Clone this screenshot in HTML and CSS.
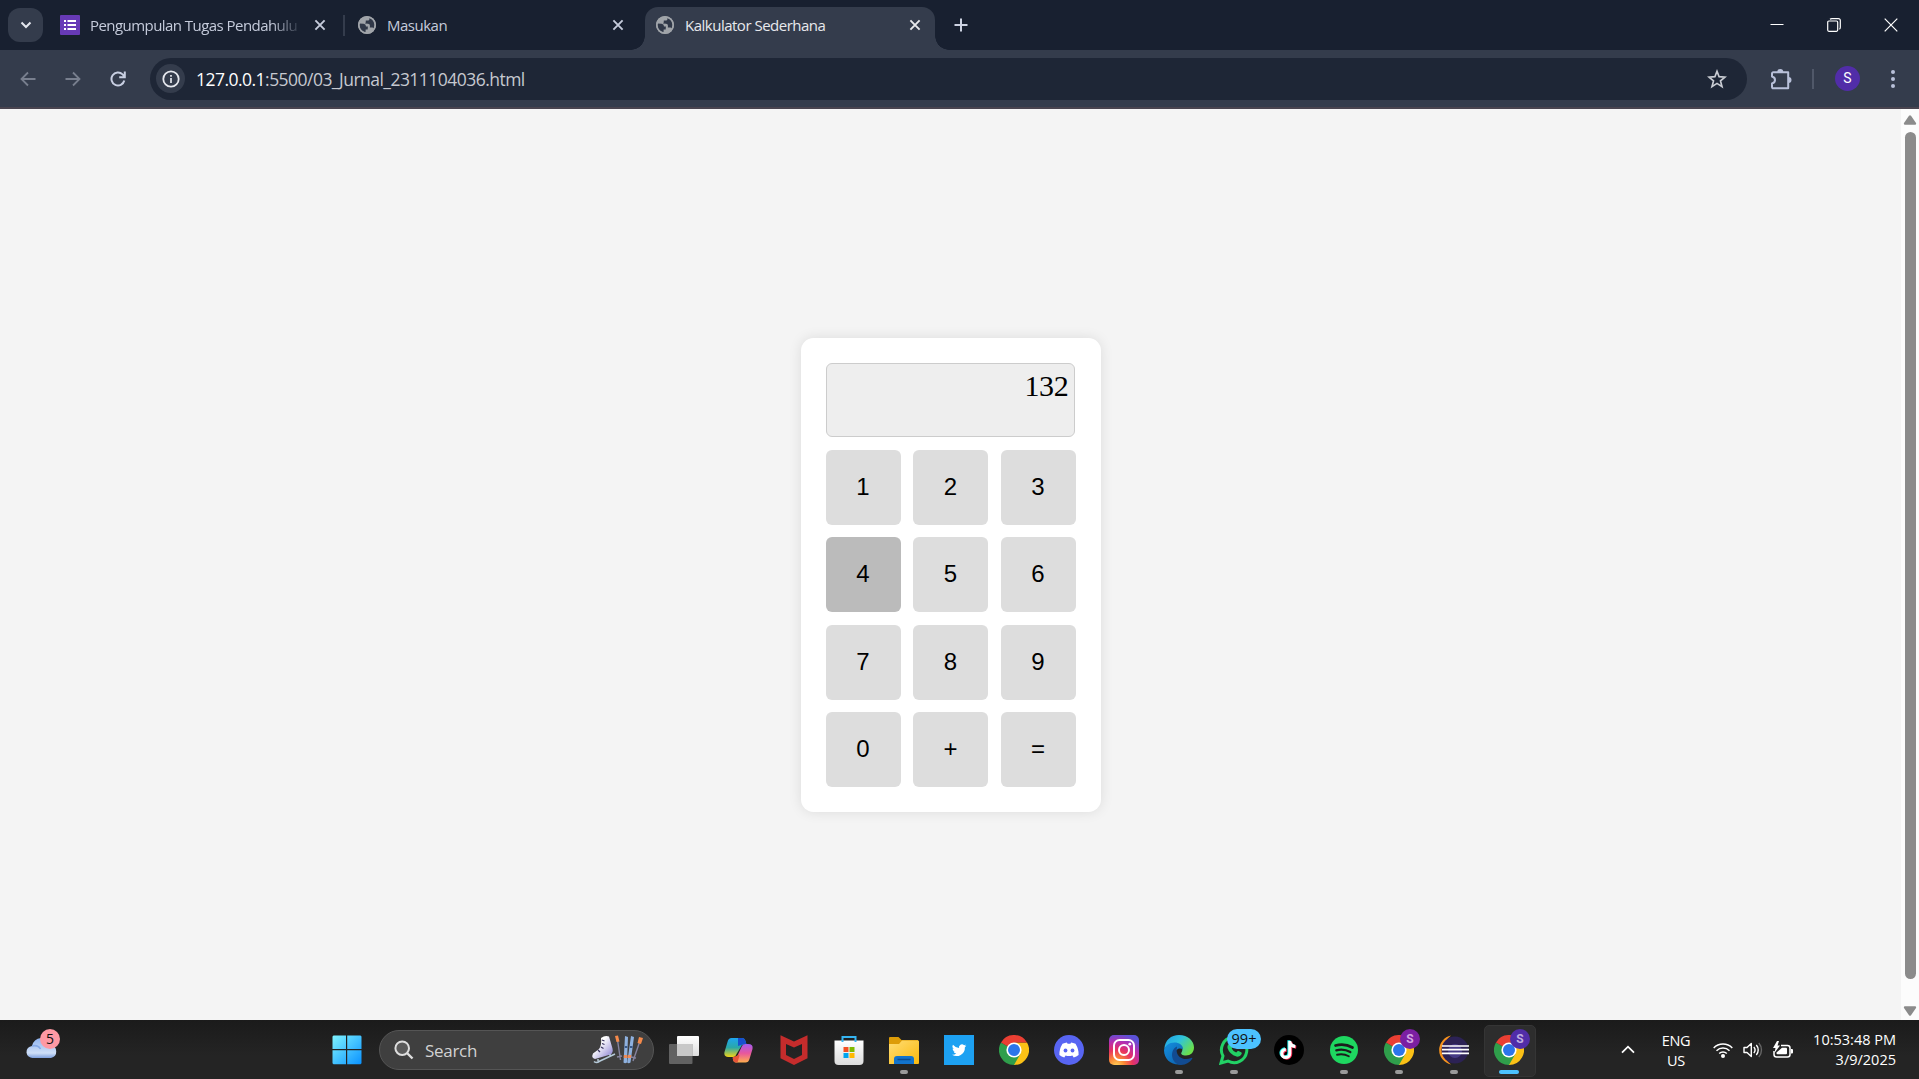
FILE: index.html
```html
<!DOCTYPE html>
<html lang="id">
<head>
<meta charset="utf-8">
<title>Kalkulator Sederhana</title>
<link rel="stylesheet" href="styles.css">
</head>
<body>
<svg class="defs" width="0" height="0" aria-hidden="true">
  <defs>
    <linearGradient id="win" x1="0" y1="0" x2="1" y2="1"><stop offset="0" stop-color="#7ff4ff"/><stop offset="1" stop-color="#0a92ff"/></linearGradient>
    <linearGradient id="cloud" x1="0" y1="0" x2="0" y2="1"><stop offset="0" stop-color="#8fb4f0"/><stop offset=".75" stop-color="#cfdff7"/><stop offset="1" stop-color="#7d9fdd"/></linearGradient>
    <linearGradient id="copA" x1="0" y1="0" x2="0" y2="1"><stop offset="0" stop-color="#1ea5f0"/><stop offset=".5" stop-color="#2aa8a8"/><stop offset="1" stop-color="#f2d415"/></linearGradient>
    <linearGradient id="copB" x1="0" y1="0" x2="0" y2="1"><stop offset="0" stop-color="#a45cf0"/><stop offset=".5" stop-color="#e8579c"/><stop offset="1" stop-color="#ffae4d"/></linearGradient>
    <linearGradient id="fold" x1="0" y1="0" x2="1" y2="1"><stop offset="0" stop-color="#ffdd75"/><stop offset="1" stop-color="#fbb90c"/></linearGradient>
    <linearGradient id="bag" x1="0" y1="0" x2="0" y2="1"><stop offset="0" stop-color="#fff"/><stop offset="1" stop-color="#dcdcdc"/></linearGradient>
    <radialGradient id="insta" cx=".25" cy="1.05" r="1.1"><stop offset="0" stop-color="#ffd85c"/><stop offset=".25" stop-color="#fb8a35"/><stop offset=".5" stop-color="#e8345f"/><stop offset=".75" stop-color="#b82fae"/><stop offset="1" stop-color="#5b52d8"/></radialGradient>
    <linearGradient id="edgeTop" x1="0" y1="0" x2="1" y2=".6"><stop offset="0" stop-color="#1f9de8"/><stop offset=".5" stop-color="#2fc3dc"/><stop offset="1" stop-color="#6be04a"/></linearGradient>
    <linearGradient id="edgeBot" x1="0" y1="0" x2="1" y2="1"><stop offset="0" stop-color="#1490e0"/><stop offset="1" stop-color="#0c59a4"/></linearGradient>
    <linearGradient id="tv" x1="0" y1="0" x2="0" y2="1"><stop offset="0" stop-color="#fff"/><stop offset="1" stop-color="#dedede"/></linearGradient>
    <linearGradient id="skate" x1="0" y1="0" x2="1" y2="1"><stop offset=".35" stop-color="#fff"/><stop offset="1" stop-color="#8177cf"/></linearGradient>
    <symbol id="x" viewBox="0 0 12 12"><path d="M1.4 1.4l9.2 9.2M10.6 1.4L1.4 10.6" stroke="currentColor" stroke-width="1.9" fill="none"/></symbol>
    <symbol id="globe" viewBox="0 0 20 20"><circle cx="10" cy="10" r="9" fill="#a0a4a9"/><path d="M2.200 9H6.500q2.500 0 2.500 2.500h2v3H9V17.500C5 17.500 2.200 14 2.200 9zM12 2.500V4q0 1.500-1.500 1.500H8.500V7.500q0 1.200-1.200 1.200H11q2 0 2 2v1.500h2.500q1 0 1.500.8a7.500 7.500 0 0 0-5-10.500z" fill="#303848" transform="rotate(4 10 10)"/><circle cx="10" cy="10" r="8.200" fill="none" stroke="#a0a4a9" stroke-width="1.700"/></symbol>
    <symbol id="chrome" viewBox="0 0 30 30">
      <path d="M15 15V7.500H28A15 15 0 0 1 15 30z" fill="#fbc116"/>
      <path d="M15 15l6.500 3.750L15 30A15 15 0 0 1 2 7.500z" fill="#2f9e4b"/>
      <path d="M15 15L2 7.500A15 15 0 0 1 28 7.500H15z" fill="#ea3f33"/>
      <circle cx="15" cy="15" r="7.600" fill="#fff"/><circle cx="15" cy="15" r="6" fill="#2b75ea"/>
    </symbol>
  </defs>
</svg>

<div class="screen">
  <header class="tabstrip">
    <div class="tab-search"><svg width="12" height="12" viewBox="0 0 12 12"><path d="M1.500 3.500L6 8l4.500-4.500" fill="none" stroke="#e4e7ee" stroke-width="2"/></svg></div>
    <div class="tab tab-one">
      <svg class="forms" width="20" height="20" viewBox="0 0 20 20"><rect width="20" height="20" rx="1" fill="#673ab7"/><path d="M4 6h2M4 10h2M4 14h2M7.500 6H16M7.500 10H16M7.500 14H16" stroke="#fff" stroke-width="2"/></svg>
      <span class="title fade">Pengumpulan Tugas Pendahulu</span>
      <svg class="close" width="12" height="12"><use href="#x"/></svg>
    </div>
    <i class="tab-sep"></i>
    <div class="tab tab-two">
      <svg width="20" height="20"><use href="#globe"/></svg>
      <span class="title">Masukan</span>
      <svg class="close" width="12" height="12"><use href="#x"/></svg>
    </div>
    <div class="tab active">
      <svg width="20" height="20"><use href="#globe"/></svg>
      <span class="title">Kalkulator Sederhana</span>
      <svg class="close" width="12" height="12"><use href="#x"/></svg>
    </div>
    <svg class="new-tab" width="14" height="14" viewBox="0 0 14 14"><path d="M7 .5v13M.5 7h13" stroke="#cdd3e2" stroke-width="2"/></svg>
    <div class="window-controls">
      <svg width="14" height="14" viewBox="0 0 14 14"><path d="M.5 6.500h13" stroke="#fff"/></svg>
      <svg width="14" height="14" viewBox="0 0 14 14" fill="none" stroke="#fff"><rect x=".7" y="3" width="10" height="10.300" rx="1.200" stroke-width="1.200"/><path d="M3 1.200C3.600.7 4 .6 5 .6h6.300c1.300 0 2 .7 2 2v6.600c0 1-.2 1.600-.9 2" stroke-width="1.200"/></svg>
      <svg width="14" height="14" viewBox="0 0 14 14"><path d="M.7.7l12.600 12.600M13.300.7L.7 13.300" stroke="#fff" stroke-width="1.200"/></svg>
    </div>
  </header>

  <nav class="toolbar">
    <svg class="nav-ic dim" width="16" height="16" viewBox="0 0 16 16"><path d="M15.500 8H1.500M8 1.500L1.500 8 8 14.500"/></svg>
    <svg class="nav-ic dim" width="16" height="16" viewBox="0 0 16 16"><path d="M.5 8h14M8 1.500L14.500 8 8 14.500"/></svg>
    <svg class="nav-ic" width="16" height="16" viewBox="0 0 16 16"><path d="M14.300 9.500A6.500 6.500 0 1 1 12.600 3.400L14.500 5.500M14.800.5v5.700H9.200"/></svg>
    <div class="omnibox">
      <span class="info"><svg width="18" height="18" viewBox="0 0 18 18"><circle cx="9" cy="9" r="7.700" fill="none" stroke="#e6e8ee" stroke-width="1.800"/><path d="M9 8v5M9 5v1.800" stroke="#e6e8ee" stroke-width="1.700"/></svg></span>
      <span class="url"><b>127.0.0.1</b>:5500/03_Jurnal_2311104036.html</span>
      <svg class="star" width="20" height="20" viewBox="0 0 20 20"><path d="M10 2.300l2.100 5.400 5.900.4-4.500 3.800 1.500 5.700-5-3.200-5 3.200 1.500-5.700L2 8.100l5.900-.4z" fill="none" stroke="#c9ccd3" stroke-width="1.700"/></svg>
    </div>
    <svg class="ext" width="22" height="22" viewBox="0 0 22 22"><path d="M3.200 4.300h15v16h-15a1.200 1.200 0 0 1-1.200-1.200V15.500c4-1 4-6 0-7V5.500a1.200 1.200 0 0 1 1.200-1.200z" fill="none" stroke="#b9c1da" stroke-width="2" stroke-linejoin="round"/><path d="M7.300 4a3 3 0 0 1 6 0zM18.500 9a3 3 0 0 1 0 6z" fill="#b9c1da"/></svg>
    <i class="tool-sep"></i>
    <span class="avatar">S</span>
    <svg class="dots" width="6" height="20" viewBox="0 0 6 20"><g fill="#b9c1da"><circle cx="3" cy="3" r="2"/><circle cx="3" cy="10" r="2"/><circle cx="3" cy="17" r="2"/></g></svg>
  </nav>

  <div class="viewport">
    <main class="page">
      <section class="calculator">
        <div class="display">132</div>
        <div class="keys">
          <button>1</button><button>2</button><button>3</button>
          <button class="hover">4</button><button>5</button><button>6</button>
          <button>7</button><button>8</button><button>9</button>
          <button>0</button><button>+</button><button>=</button>
        </div>
      </section>
    </main>
    <aside class="scrollbar">
      <svg width="14" height="10" viewBox="0 0 14 10"><path d="M6 .8q1-1 2 0L13 8q.6 1.700-1 1.700H2Q.4 9.700 1 8z" fill="#8b8b8b"/></svg>
      <i class="thumb"></i>
      <svg width="14" height="10" viewBox="0 0 14 10"><path d="M6 9.200q1 1 2 0L13 2Q13.600.3 12 .3H2Q.4.3 1 2z" fill="#8b8b8b"/></svg>
    </aside>
  </div>

  <footer class="taskbar">
    <div class="weather">
      <svg width="32" height="22" viewBox="0 0 32 22"><path d="M7 21a6 6 0 0 1-1-12A9.500 9.500 0 0 1 24.500 8 6.600 6.600 0 0 1 25 21z" fill="url(#cloud)"/><path d="M6 9q6-1.500 8.500 3" fill="none" stroke="#86aae8" stroke-width="1.500"/></svg>
      <span class="count">5</span>
    </div>

    <div class="dock">
      <span class="app start"><svg width="30" height="30" viewBox="0 0 30 30"><path d="M1.500.5H14V14H.5V1.500zM15.200.5h13.300l1 1V14H15.200zM.5 15.200H14v14H1.500l-1-1zM15.200 15.200h14.300v13l-1 1H15.200z" fill="url(#win)"/></svg></span>
      <div class="search">
        <svg width="20" height="20" viewBox="0 0 20 20"><circle cx="8.200" cy="8.200" r="6.800" fill="#5a5a5a" stroke="#dedede" stroke-width="2"/><path d="M13 13l5.500 5.500" stroke="#dedede" stroke-width="2.400"/></svg>
        <span>Search</span>
        <svg class="winter" width="54" height="30" viewBox="0 0 54 30">
          <path d="M10 3q4-3 8-1.500l3.500 12q1 4-2 6L4 24q-4-1-2-5.500l6-4.500q3-4 2-11z" fill="url(#skate)"/>
          <path d="M11 5l2.500 1M11 8.500l2.500 1M10 12l2.500 1.500M7 15l2 2" stroke="#38335f" stroke-width="1.300"/>
          <path d="M3 26.500q2 2 6-.5L24 19M7 24v2M19 19v2" fill="none" stroke="#b5c9d8" stroke-width="1.500"/>
          <path d="M26.500 5l3 20M26 22l5-1M49 6l-7 20M40 22l5 1" stroke="#85849f" stroke-width="1.400"/>
          <path d="M24 1l3-.5 1.500 6-3 .5zM48 2l4 1-2 6-3.500-1z" fill="#f58a4b"/>
          <path d="M34 1l3 1-1 25.500q-2 1.500-3.500 0zM40 1l3 1-3.500 25.500q-2 1.500-3.300 0z" fill="#8eb1df"/>
          <path d="M32.800 20h3.500v3h-3.600zM37 20h3.400l-.5 3h-3.300z" fill="#ee8c59"/><path d="M33.800 12h2.500M39 12h2.500" stroke="#37598b" stroke-width="2"/>
        </svg>
      </div>
      <span class="app first"><svg width="30" height="30" viewBox="0 0 30 30"><rect x="8" y="1" width="22" height="20" rx="1" fill="url(#tv)"/><path d="M1 9h22.500v19q0 1-1 1H1q-1 0-1-1V10q0-1 1-1z" fill="#777" fill-opacity=".75"/><path d="M8 9h15.500v12H8z" fill="#c8c8c8"/></svg></span>
      <span class="app"><svg width="30" height="30" viewBox="0 0 30 30"><path d="M7.500 3H18q2.500 0 3.500 3l1 3.500h-3q-2 0-3 3L12.500 19q-1 3-3.500 3H4.500q-5 0-4-5L3.500 7Q4.400 3 7.500 3z" fill="url(#copA)"/><path d="M14 3h4q2.500 0 3.500 3l1 3.500h-4L14 11z" fill="#1750cf"/><path d="M21.500 9H24q5.500 0 4.500 5l-3 10q-1 3.500-4 3.500H12q-2.500 0-3-3l-.5-2h3q2-.5 3-4L18 11q1-2 3.500-2z" fill="url(#copB)"/><path d="M9 22l3.500-1q1.500-.5 2-2l1 1.500-2 7H12q-2.500 0-3-3z" fill="#e65438"/></svg></span>
      <span class="app"><svg width="30" height="30" viewBox="0 0 30 30"><path d="M1.500.2L15 6.500 28.500.2v23L15 30 1.500 23.200zM7 9v11l8 4 8-4V9l-8 3.500z" fill="#c52c2c" fill-rule="evenodd"/></svg></span>
      <span class="app"><svg width="30" height="30" viewBox="0 0 30 30"><path d="M.5 5.500h29V26q0 4-4 4h-21q-4 0-4-4z" fill="url(#bag)"/><path d="M8.500 7V2h13v5" fill="none" stroke="#35b5f2" stroke-width="2"/><path d="M9.500 12h5v5h-5z" fill="#f25022"/><path d="M15.500 12h5v5h-5z" fill="#7fba00"/><path d="M9.500 18h5v5h-5z" fill="#00a4ef"/><path d="M15.500 18h5v5h-5z" fill="#ffb900"/></svg></span>
      <span class="app run"><svg width="30" height="30" viewBox="0 0 30 30"><path d="M0 3q0-1 1-1h8.500l3 3H29v6H0z" fill="#dd9c08"/><path d="M0 9h10l3-3.500h16q1 0 1 1V28q0 1-1 1H0z" fill="url(#fold)"/><path d="M5 29v-5q0-3 3-3h14q3 0 3 3v5z" fill="#1273cc"/><path d="M8.500 24.500h13" stroke="#0a4c91" stroke-width="1.500"/></svg></span>
      <span class="app"><svg width="30" height="30" viewBox="0 0 30 30"><path d="M0 0h30v30H0z" fill="#1da1f2"/><path transform="translate(8 8) scale(.6)" d="M23.900 4.600a10 10 0 0 1-2.800.8 4.900 4.900 0 0 0 2.100-2.700 9.800 9.800 0 0 1-3.100 1.200 4.900 4.900 0 0 0-8.400 4.500A14 14 0 0 1 1.600 3.100a4.900 4.900 0 0 0 1.500 6.600 4.900 4.900 0 0 1-2.200-.6 4.900 4.900 0 0 0 3.900 4.900 4.900 4.900 0 0 1-2.200.1 4.900 4.900 0 0 0 4.600 3.400A9.900 9.900 0 0 1 0 19.500a14 14 0 0 0 21.500-12.400 10 10 0 0 0 2.400-2.500z" fill="#fff"/></svg></span>
      <span class="app"><svg width="30" height="30"><use href="#chrome"/></svg></span>
      <span class="app"><svg width="30" height="30" viewBox="0 0 30 30"><circle cx="15" cy="15" r="15" fill="#5865f2"/><path d="M8.500 8.800q2.500-1.100 4.400-1.300l.7 1.300h2.800l.7-1.300q1.900.2 4.400 1.300 3.400 5.500 3.100 11.200-2.200 1.800-4.900 2.400l-1.300-2q-3.400 1-6.800 0l-1.300 2q-2.700-.6-4.900-2.400-.3-5.700 3.100-11.200z" fill="#fff"/><ellipse cx="11.500" cy="15.500" rx="1.900" ry="2.100" fill="#5865f2"/><ellipse cx="18.500" cy="15.500" rx="1.900" ry="2.100" fill="#5865f2"/></svg></span>
      <span class="app"><svg width="30" height="30" viewBox="0 0 30 30"><rect width="30" height="30" rx="5" fill="url(#insta)"/><g fill="none" stroke="#fff" stroke-width="2"><rect x="5" y="5" width="20" height="20" rx="5.500"/><circle cx="15" cy="15" r="5"/></g><circle cx="20.800" cy="9.200" r="1.400" fill="#fff"/></svg></span>
      <span class="app run"><svg width="30" height="30" viewBox="0 0 30 30"><path d="M.3 14C1 5 7 0 15 0c9 0 15 6 15 12.500 0 5-3.500 8-8 8-4 0-5.500-1.500-4.500-3 2-3 1-8.500-5-8.500C6 9 2 11 .3 14z" fill="url(#edgeTop)"/><path d="M0 15C1 11 5 7.500 10.500 7.500c4.500 0 8.500 2.500 8.500 6.500-8-3-10 6-5 11 2 2 6 3 9 2.500C12 33 0 27 0 15z" fill="url(#edgeBot)"/><path d="M13 11.500C5 15 7 29 17 30c5 0 9.500-3 11.300-6.500.3-.7-.3-1-1-.6-7 3.100-14-.4-14.600-6.400-.2-2 .3-4 .3-5z" fill="#124b91"/></svg></span>
      <span class="app run"><svg width="30" height="30" viewBox="0 0 30 30"><path d="M2 28L4 21A12.700 12.700 0 1 1 9 26z" fill="none" stroke="#22d165" stroke-width="3"/><path d="M11 8q1.500-.5 2 1l1 2.500-1.300 2q1.500 3 4.500 4l1.800-1.800 3.200 1.500q1 .5.3 2-1.500 3-5 2.300-7-2-9-8.500-.5-3.500 2.500-5z" fill="#22d165"/></svg><em class="pill">99+</em></span>
      <span class="app"><svg width="30" height="30" viewBox="0 0 30 30"><circle cx="15" cy="15" r="15" fill="#000"/><g fill="none" stroke-width="3"><path d="M15.800 6v12.500a4 4 0 1 1-4-4M15.800 6.500q.5 4.500 5.500 5" stroke="#25f4ee" transform="translate(-.9 -.7)"/><path d="M15.800 6v12.500a4 4 0 1 1-4-4M15.800 6.500q.5 4.500 5.500 5" stroke="#fe2c55" transform="translate(.9 .7)"/><path d="M15.800 6v12.500a4 4 0 1 1-4-4M15.800 6.500q.5 4.500 5.500 5" stroke="#fff"/></g></svg></span>
      <span class="app run"><svg width="30" height="30" viewBox="0 0 30 30"><circle cx="15" cy="15" r="14" fill="#1ed760"/><g fill="none" stroke="#1c1c1c" stroke-linecap="round"><path d="M6.500 10.500q9-2.500 17 2" stroke-width="2.700"/><path d="M7.300 15.300q7.500-2 14 1.800" stroke-width="2.300"/><path d="M8 19.700q6.500-1.500 11.800 1.600" stroke-width="1.900"/></g></svg></span>
      <span class="app run"><svg width="30" height="30"><use href="#chrome"/></svg><em class="profile violet">S</em></span>
      <span class="app run"><svg width="30" height="30" viewBox="0 0 30 30"><path d="M12 .5A14.800 14.800 0 0 0 12 29.500 18 18 0 0 1 12 .5z" fill="#f7941e"/><circle cx="16" cy="15" r="13.500" fill="#2c2255"/><circle cx="16" cy="16" r="7" fill="#453a85"/><path d="M3 11h27M3 14.700h27M3 18.400h27" stroke="#fff" stroke-width="1.700"/></svg></span>
      <span class="app run current"><svg width="30" height="30"><use href="#chrome"/></svg><em class="profile">S</em></span>
    </div>

    <div class="tray">
      <svg class="chev" width="14" height="9" viewBox="0 0 14 9"><path d="M1 7.700l6-6 6 6" fill="none" stroke="#fff" stroke-width="1.800"/></svg>
      <div class="lang">ENG<br>US</div>
      <svg class="wifi" width="20" height="16" viewBox="0 0 20 16"><g fill="none" stroke="#fff" stroke-width="1.500"><path d="M.7 6a13 13 0 0 1 18.600 0M3.500 8.800a9.200 9.200 0 0 1 13 0M6.200 11.500a5.400 5.400 0 0 1 7.600 0"/></g><circle cx="10" cy="14" r="2" fill="#fff"/></svg>
      <svg class="vol" width="20" height="16" viewBox="0 0 20 16"><g fill="none" stroke="#fff" stroke-width="1.400"><path d="M1 5.500h3L8.300 1.500v13L4 10.500H1z" stroke-linejoin="round"/><path d="M10.800 5a4.600 4.600 0 0 1 0 6M13.300 3a7.500 7.500 0 0 1 0 10"/><path d="M15.800 1a10.500 10.500 0 0 1 0 14" stroke="#666"/></g></svg>
      <svg class="bat" width="20" height="18" viewBox="0 0 20 18"><path d="M8 4.500h6.500q2.500 0 2.500 2.500v6.500q0 2.500-2.500 2.500h-11Q1 16 1 13.500V10" fill="none" stroke="#fff" stroke-width="1.500"/><path d="M9 6.700h4q1 0 1 1v4.600q0 1-1 1H4.500q-1 0-1-1V11.500z" fill="#fff"/><path d="M18 8h1q1 0 1 1v2.500q0 1-1 1h-1zM4 0L0 7h2.500l-1 5L7 4.500H4.500L6 0z" fill="#fff"/></svg>
      <div class="clock">10:53:48 PM<br>3/9/2025</div>
    </div>
  </footer>
</div>
</body>
</html>
```
FILE: styles.css
```css
* { box-sizing: border-box; }
body { margin: 0; overflow: hidden; font-family: "Open Sans", "Noto Sans", sans-serif; }
svg { display: block; flex: none; }
.defs { position: absolute; }
.screen { width: 1919px; height: 1079px; display: flex; flex-direction: column; }

/* tab strip */
.tabstrip { height: 50px; flex: none; display: flex; align-items: center; background: #182030; padding-left: 8px; }
.tab-search { width: 35px; height: 34px; border-radius: 12px; background: #343c4c; display: flex; align-items: center; justify-content: center; }
.tab { display: flex; align-items: center; color: #c5cbdb; height: 50px; }
.title { flex: 1; font-size: 15px; letter-spacing: -0.500px; line-height: 22px; white-space: nowrap; }
.tab-one { width: 283px; margin-left: 17px; }
.forms { margin-right: 10px; }
.fade { flex: none; width: 208px; margin-right: 16px; letter-spacing: -0.550px; mask-image: linear-gradient(90deg, #000 87%, rgba(0, 0, 0, .15)); }
.tab-sep { width: 2px; height: 21px; background: #343c4c; }
.tab-two { flex: none; width: 267px; margin-left: 12px; }
.tab-two .title, .active .title { margin-left: 10px; }
.active { position: relative; width: 290px; height: 43px; margin: 7px 0 0 21px; padding: 0 14px 7px 10px; background: #343c4c; border-radius: 13px 13px 0 0; color: #e8e9ed; }
.active::before, .active::after { content: ""; position: absolute; bottom: 0; width: 14px; height: 14px; }
.active::before { left: -14px; background: radial-gradient(circle at 0 0, transparent 13.5px, #343c4c 14px); }
.active::after { right: -14px; background: radial-gradient(circle at 100% 0, transparent 13.5px, #343c4c 14px); }
.new-tab { margin-left: 19px; }
.window-controls { margin-left: auto; display: flex; gap: 43px; padding-right: 21px; }

/* toolbar */
.toolbar { height: 59px; flex: none; display: flex; align-items: center; background: #343c4c; border-bottom: 2px solid #49444f; padding: 0 23px 0 19.500px; }
.nav-ic { margin-right: 29px; fill: none; stroke: #c8cfe2; stroke-width: 2; }
.nav-ic.dim { stroke: #787f8e; stroke-width: 1.800; }
.omnibox { width: 1597px; height: 42px; margin-left: -4.500px; border-radius: 21px; background: #1e2636; display: flex; align-items: center; padding: 0 20px 0 6px; }
.info { width: 29px; height: 29px; border-radius: 50%; background: #343c4c; display: flex; align-items: center; justify-content: center; }
.url { margin-left: 11px; flex: 1; font-size: 17.500px; letter-spacing: -0.530px; color: #c6c9d0; line-height: 24px; }
.url b { font-weight: 400; color: #fff; }
.ext { margin-left: 23px; }
.tool-sep { width: 2px; height: 20px; background: #505869; margin-left: 20px; }
.avatar { width: 25px; height: 25px; margin-left: 21px; border-radius: 50%; background: #512da8; color: #fff; font: 14px/25px Roboto, sans-serif; text-align: center; }
.dots { margin-left: auto; }

/* page */
.viewport { flex: 1; display: flex; min-height: 0; }
.page { flex: 1; background: #f4f4f4; display: flex; justify-content: center; padding-top: 229px; align-items: flex-start; }
.calculator { width: 300px; height: 474px; padding: 25px; background: #fff; border-radius: 12.500px; box-shadow: 0 0 12.500px rgba(0, 0, 0, .1); }
.display { width: 249px; height: 74px; padding: 4px 5px; margin-bottom: 12.800px; border: 1px solid #ccc; border-radius: 6px; background: #eee; font: 30px/35px "Liberation Serif", serif; letter-spacing: -0.300px; text-align: right; }
.keys { display: grid; grid-template-columns: repeat(3, 75px); grid-auto-rows: 75px; column-gap: 12.500px; row-gap: 12.400px; }
.keys button { border: 0; padding: 0 0 1px; border-radius: 6px; background: #ddd; color: #000; font: 24px "Liberation Sans", sans-serif; }
.keys .hover { background: #bbb; }
.scrollbar { width: 18px; background: #fcfcfc; display: flex; flex-direction: column; align-items: center; padding: 6px 0 4px; }
.thumb { width: 11px; flex: 1; margin: 7px 0 27px; border-radius: 6px; background: #8b8b8b; }

/* taskbar */
.taskbar { height: 59px; flex: none; display: flex; background: linear-gradient(#1b1b1b, #242424 60%); color: #fff; }
.weather { position: relative; width: 320px; padding: 17px 0 0 26px; }
.count { position: absolute; left: 40px; top: 9px; width: 20px; height: 20px; border-radius: 50%; background: #ff99a4; color: #111; font-size: 14px; line-height: 19px; text-align: center; }
.dock { display: flex; }
.app { position: relative; width: 55px; height: 59px; padding: 15px 12.500px; }
.app.start { padding-left: 12px; }
.search { width: 275px; height: 40px; margin-top: 10px; margin-left: 4px; padding: 0 8px 0 14px; border: 1px solid #555; border-radius: 20px; background: #3f3f3f; display: flex; align-items: center; }
.search span { font-size: 17px; letter-spacing: -0.3px; margin-left: 11px; color: #d2d2d2; }
.winter { margin-left: auto; }
.app.first { margin-left: 2.500px; }
.run::after { content: ""; position: absolute; left: 23.500px; top: 50px; width: 8px; height: 4px; border-radius: 2px; background: #9a9a9a; }
.current::before { content: ""; position: absolute; left: 2.500px; top: 5px; width: 50px; height: 50px; border-radius: 5px; background: #2d2d2d; border: 1px solid #353535; }
.current svg { position: relative; }
.current::after { left: 17.500px; width: 20px; background: #4cc2ff; }
.pill { position: absolute; left: 20.500px; top: 9px; width: 34px; height: 20px; border-radius: 10px; background: #4cc2ff; color: #111; font-style: normal; font-size: 14.500px; line-height: 20px; text-align: center; }
.profile { position: absolute; left: 28.500px; top: 9px; width: 20px; height: 20px; border-radius: 50%; background: #512da8; color: #bfaee0; font: 700 12px/20px Roboto, sans-serif; text-align: center; }
.violet { background: #7b1fa2; color: #d3a6e2; }
.tray { margin-left: auto; display: flex; align-items: center; padding-right: 23px; font-size: 14.500px; line-height: 20px; letter-spacing: -0.3px; }
.lang { width: 50px; margin-left: 16px; text-align: center; padding-top: 2px; }
.wifi { margin-left: 12px; }
.vol { margin-left: 10px; }
.bat { margin-left: 10px; }
.clock { width: 103px; text-align: right; letter-spacing: 0; }
```
